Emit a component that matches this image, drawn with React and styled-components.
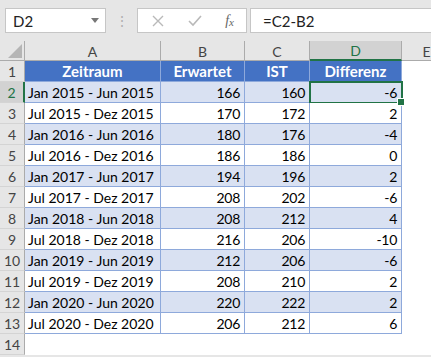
import React from "react";
import styled, { createGlobalStyle } from "styled-components";

const GlobalStyle = createGlobalStyle`
  html, body {
    margin: 0;
    padding: 0;
    background: #ffffff;
  }
  body {
    font-family: Lato, "Liberation Sans", sans-serif;
  }
`;

const rows = [
  ["Jan 2015 - Jun 2015", 166, 160],
  ["Jul 2015 - Dez 2015", 170, 172],
  ["Jan 2016 - Jun 2016", 180, 176],
  ["Jul 2016 - Dez 2016", 186, 186],
  ["Jan 2017 - Jun 2017", 194, 196],
  ["Jul 2017 - Dez 2017", 208, 202],
  ["Jan 2018 - Jun 2018", 208, 212],
  ["Jul 2018 - Dez 2018", 216, 206],
  ["Jan 2019 - Jun 2019", 212, 206],
  ["Jul 2019 - Dez 2019", 208, 210],
  ["Jan 2020 - Jun 2020", 220, 222],
  ["Jul 2020 - Dez 2020", 206, 212],
];

const columns = ["A", "B", "C", "D", "E"];

const App = () => {
  return (
    <Page>
      <GlobalStyle />
      <FormulaBar>
        <NameBox>
          <span>D2</span>
          <Caret />
        </NameBox>
        <Grip>⋮</Grip>
        <ActionBox>
          <svg width="14" height="14" viewBox="0 0 14 14">
            <path d="M2 2 L12 12 M12 2 L2 12" stroke="#b9b9b9" strokeWidth="1.4" fill="none" />
          </svg>
          <svg width="16" height="14" viewBox="0 0 16 14">
            <path d="M2 7 L6 11 L14 2" stroke="#b9b9b9" strokeWidth="1.6" fill="none" />
          </svg>
          <Fx>
            f<sub>x</sub>
          </Fx>
        </ActionBox>
        <FormulaInput>=C2-B2</FormulaInput>
      </FormulaBar>

      <Sheet>
        <Corner>
          <svg width="14" height="14" viewBox="0 0 14 14">
            <polygon points="14,0 14,14 0,14" fill="#b5b5b5" />
          </svg>
        </Corner>
        {columns.map((c) => (
          <ColHead key={c} active={c === "D"}>
            {c}
          </ColHead>
        ))}

        <RowHead>1</RowHead>
        <HeadCell>Zeitraum</HeadCell>
        <HeadCell>Erwartet</HeadCell>
        <HeadCell>IST</HeadCell>
        <HeadCell>Differenz</HeadCell>
        <Empty />

        {rows.map(([period, exp, ist], i) => {
          const band = i % 2 === 0;
          return (
            <React.Fragment key={period}>
              <RowHead active={i === 0}>{i + 2}</RowHead>
              <Cell band={band}>{period}</Cell>
              <Cell band={band} num>
                {exp}
              </Cell>
              <Cell band={band} num>
                {ist}
              </Cell>
              <Cell band={band} num selected={i === 0}>
                {ist - exp}
                {i === 0 && <Handle />}
              </Cell>
              <Empty />
            </React.Fragment>
          );
        })}

        <RowHead>14</RowHead>
        <Empty />
        <Empty />
        <Empty />
        <Empty />
        <Empty />
      </Sheet>
    </Page>
  );
};

export default App;

const Page = styled.div`
  width: 431px;
  height: 357px;
  overflow: hidden;
  background: #e6e6e6;
  font-family: Lato, "Liberation Sans", sans-serif;
`;

const FormulaBar = styled.div`
  display: flex;
  align-items: center;
  height: 41px;
  padding: 0 0 0 5px;
  box-sizing: border-box;
`;

const NameBox = styled.div`
  width: 101px;
  height: 25px;
  box-sizing: border-box;
  border: 1px solid #c6c6c6;
  background: #fff;
  display: flex;
  align-items: center;
  justify-content: space-between;
  padding: 0 6px 0 7px;
  font-size: 15px;
  color: #222;
`;

const Caret = styled.span`
  width: 0;
  height: 0;
  border-left: 4px solid transparent;
  border-right: 4px solid transparent;
  border-top: 5px solid #777;
`;

const Grip = styled.div`
  width: 31px;
  text-align: center;
  color: #b0b0b0;
  font-size: 14px;
`;

const ActionBox = styled.div`
  width: 110px;
  height: 25px;
  box-sizing: border-box;
  border: 1px solid #c6c6c6;
  background: #fff;
  display: flex;
  align-items: center;
  justify-content: space-between;
  padding: 0 12px 0 13px;
  margin-right: 3px;
`;

const Fx = styled.span`
  font-family: "Liberation Serif", serif;
  font-style: italic;
  font-size: 14px;
  color: #666;
  sub {
    font-size: 11px;
    vertical-align: baseline;
    position: relative;
    top: 1px;
  }
`;

const FormulaInput = styled.div`
  flex: 1;
  height: 25px;
  box-sizing: border-box;
  border: 1px solid #c6c6c6;
  border-right: none;
  background: #fff;
  display: flex;
  align-items: center;
  padding-left: 12px;
  font-size: 15px;
  color: #222;
`;

const Sheet = styled.div`
  display: grid;
  grid-template-columns: 25px 136px 84px 65px 92px 50px;
  grid-template-rows: 20px repeat(14, 21px);
  background: #fff;
`;

const Corner = styled.div`
  background: #e6e6e6;
  border-right: 1px solid #ababab;
  border-bottom: 1px solid #ababab;
  display: flex;
  align-items: flex-end;
  justify-content: flex-end;
  padding: 0 2px 2px 0;
  box-sizing: border-box;
`;

const ColHead = styled.div`
  background: ${(p) => (p.active ? "#d2d2d2" : "#e6e6e6")};
  color: ${(p) => (p.active ? "#217346" : "#444")};
  border-right: 1px solid #ababab;
  border-bottom: ${(p) => (p.active ? "2px solid #217346" : "1px solid #ababab")};
  box-sizing: border-box;
  display: flex;
  align-items: center;
  justify-content: center;
  font-size: 14px;
  padding-top: 1px;
`;

const RowHead = styled.div`
  background: ${(p) => (p.active ? "#d2d2d2" : "#e6e6e6")};
  color: ${(p) => (p.active ? "#217346" : "#444")};
  border-right: ${(p) => (p.active ? "2px solid #217346" : "1px solid #ababab")};
  border-bottom: 1px solid #d4d4d4;
  box-sizing: border-box;
  display: flex;
  align-items: center;
  justify-content: center;
  font-size: 14px;
`;

const HeadCell = styled.div`
  background: #4472c4;
  color: #fff;
  font-weight: 700;
  font-size: 15px;
  display: flex;
  align-items: center;
  justify-content: center;
  border-right: 1px solid #8ea9db;
  border-bottom: 1px solid #8ea9db;
  box-sizing: border-box;
`;

const Cell = styled.div`
  position: relative;
  background: ${(p) => (p.band ? "#d9e1f2" : "#fff")};
  color: #000;
  font-size: 14px;
  letter-spacing: ${(p) => (p.num ? "-0.3px" : "0")};
  display: flex;
  align-items: center;
  justify-content: ${(p) => (p.num ? "flex-end" : "flex-start")};
  padding: 0 4px 0 3px;
  border-right: 1px solid #8ea9db;
  border-bottom: 1px solid #8ea9db;
  box-sizing: border-box;
  white-space: nowrap;
  ${(p) =>
    p.selected &&
    `
    outline: 2px solid #217346;
    outline-offset: -1px;
  `}
`;

const Handle = styled.span`
  position: absolute;
  right: -4px;
  bottom: -4px;
  width: 6px;
  height: 6px;
  background: #217346;
  border: 1px solid #fff;
  z-index: 2;
`;

const Empty = styled.div`
  background: #fff;
`;
